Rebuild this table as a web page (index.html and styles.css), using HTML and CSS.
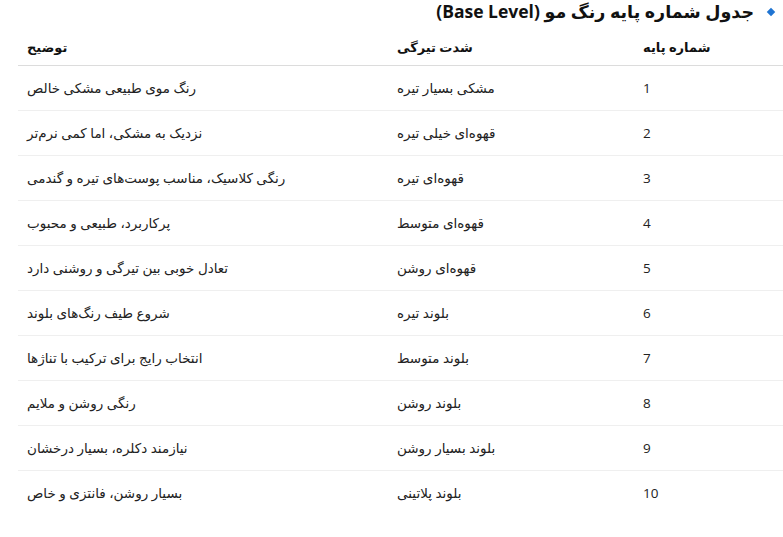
FILE: index.html
```html
<!DOCTYPE html>
<html lang="fa" dir="rtl">
<head>
<meta charset="utf-8">
<title>جدول شماره پایه رنگ مو</title>
<link rel="stylesheet" href="styles.css">
</head>
<body>
<div class="page">
  <h3 class="title"><span class="bullet"></span><span class="title-text">جدول شماره پایه رنگ مو (Base Level)</span></h3>
  <table class="levels">
    <colgroup>
      <col class="c-num">
      <col class="c-shade">
      <col class="c-desc">
    </colgroup>
    <thead>
      <tr><th>شماره پایه</th><th>شدت تیرگی</th><th>توضیح</th></tr>
    </thead>
    <tbody>
      <tr><td>1</td><td>مشکی بسیار تیره</td><td>رنگ موی طبیعی مشکی خالص</td></tr>
      <tr><td>2</td><td>قهوه‌ای خیلی تیره</td><td>نزدیک به مشکی، اما کمی نرم‌تر</td></tr>
      <tr><td>3</td><td>قهوه‌ای تیره</td><td>رنگی کلاسیک، مناسب پوست‌های تیره و گندمی</td></tr>
      <tr><td>4</td><td>قهوه‌ای متوسط</td><td>پرکاربرد، طبیعی و محبوب</td></tr>
      <tr><td>5</td><td>قهوه‌ای روشن</td><td>تعادل خوبی بین تیرگی و روشنی دارد</td></tr>
      <tr><td>6</td><td>بلوند تیره</td><td>شروع طیف رنگ‌های بلوند</td></tr>
      <tr><td>7</td><td>بلوند متوسط</td><td>انتخاب رایج برای ترکیب با تناژها</td></tr>
      <tr><td>8</td><td>بلوند روشن</td><td>رنگی روشن و ملایم</td></tr>
      <tr><td>9</td><td>بلوند بسیار روشن</td><td>نیازمند دکلره، بسیار درخشان</td></tr>
      <tr><td>10</td><td>بلوند پلاتینی</td><td>بسیار روشن، فانتزی و خاص</td></tr>
    </tbody>
  </table>
</div>
</body>
</html>
```
FILE: styles.css
```css
html, body {
  margin: 0;
  padding: 0;
  background: #ffffff;
}
body {
  font-family: "Open Sans", "DejaVu Sans", sans-serif;
  color: #222222;
  direction: rtl;
  overflow: hidden;
}
.page {
  width: 783px;
}
.title {
  margin: 0;
  height: 23px;
  line-height: 23px;
  font-size: 17.5px;
  font-weight: bold;
  color: #111111;
  display: flex;
  align-items: center;
  gap: 14px;
  padding-right: 9px;
}
.bullet {
  width: 6px;
  height: 6px;
  background: #1f74d2;
  transform: rotate(45deg);
  flex: none;
}
.levels {
  width: 765px;
  border-collapse: collapse;
  table-layout: fixed;
  font-size: 13.5px;
}
.c-num { width: 149px; }
.c-shade { width: 246px; }
.c-desc { width: 370px; }
.levels th,
.levels td {
  text-align: left;
  padding: 0 9px;
  height: 44px;
  line-height: 20px;
  vertical-align: middle;
}
.levels th {
  height: 37px;
  padding-top: 5px;
  font-size: 13px;
  font-weight: bold;
  color: #111111;
  border-bottom: 1px solid #dcdcdc;
}
.levels tbody td {
  border-bottom: 1px solid #efefef;
}
.levels tbody tr:last-child td {
  border-bottom: none;
}
```
